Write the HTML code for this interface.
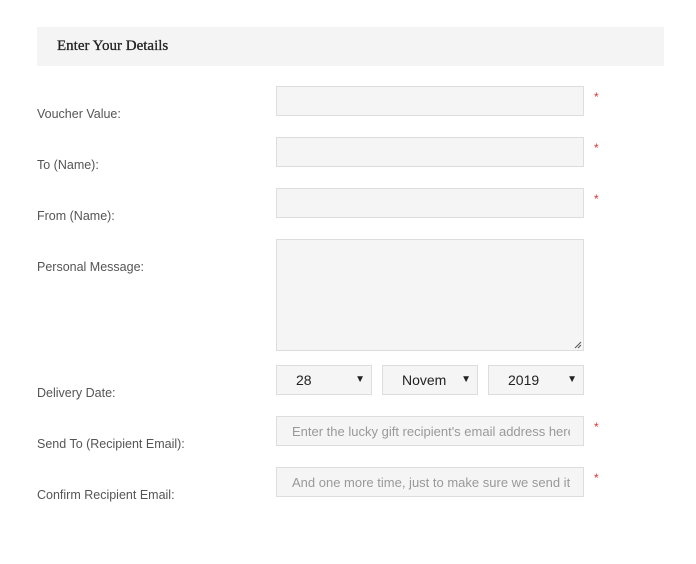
<!DOCTYPE html><html><head><style>
body{margin:0;width:696px;height:564px;background:#fff;position:relative;font-family:"Liberation Sans",sans-serif;overflow:hidden}
.h{position:absolute;left:37px;top:27px;width:627px;height:39px;background:#f4f4f4}
.h span{position:absolute;left:20px;top:11px;font-family:"Liberation Serif",serif;font-size:15px;color:#222;font-weight:normal;-webkit-text-stroke:0.3px #222}
.l{position:absolute;left:37px;font-size:12.5px;color:#555}
.b{position:absolute;left:276px;width:306px;height:28px;background:#f5f5f5;border:1px solid #ddd}
.a{position:absolute;left:594px;color:#d33;font-size:12px}
.s{position:absolute;top:365px;width:94px;height:28px;background:#f5f5f5;border:1px solid #ddd;font-size:14px;color:#222}
.s span{position:absolute;top:6px}
.s i{position:absolute;right:6px;top:8px;font-style:normal;font-size:10px}
.p{position:absolute;left:15px;top:7px;font-size:13px;color:#999;white-space:nowrap;overflow:hidden;width:278px}
</style></head><body>
<div class="h"><span>Enter Your Details</span></div>
<div class="l" style="top:107px">Voucher Value:</div>
<div class="l" style="top:158px">To (Name):</div>
<div class="l" style="top:209px">From (Name):</div>
<div class="l" style="top:260px">Personal Message:</div>
<div class="l" style="top:386px">Delivery Date:</div>
<div class="l" style="top:437px">Send To (Recipient Email):</div>
<div class="l" style="top:488px">Confirm Recipient Email:</div>
<div class="b" style="top:86px"></div><div class="a" style="top:90px">*</div>
<div class="b" style="top:137px"></div><div class="a" style="top:141px">*</div>
<div class="b" style="top:188px"></div><div class="a" style="top:192px">*</div>
<div class="b" style="top:239px;height:110px"><svg style="position:absolute;right:1px;bottom:1px" width="8" height="8"><path d="M1 7L7 1M4 7L7 4" stroke="#555" stroke-width="1"/></svg></div>
<div class="s" style="left:276px"><span style="left:19px">28</span><i>▼</i></div>
<div class="s" style="left:382px"><span style="left:19px">Novem</span><i>▼</i></div>
<div class="s" style="left:488px"><span style="left:19px">2019</span><i>▼</i></div>
<div class="b" style="top:416px"><div class="p">Enter the lucky gift recipient's email address here</div></div><div class="a" style="top:420px">*</div>
<div class="b" style="top:467px"><div class="p">And one more time, just to make sure we send it</div></div><div class="a" style="top:471px">*</div>
</body></html>
